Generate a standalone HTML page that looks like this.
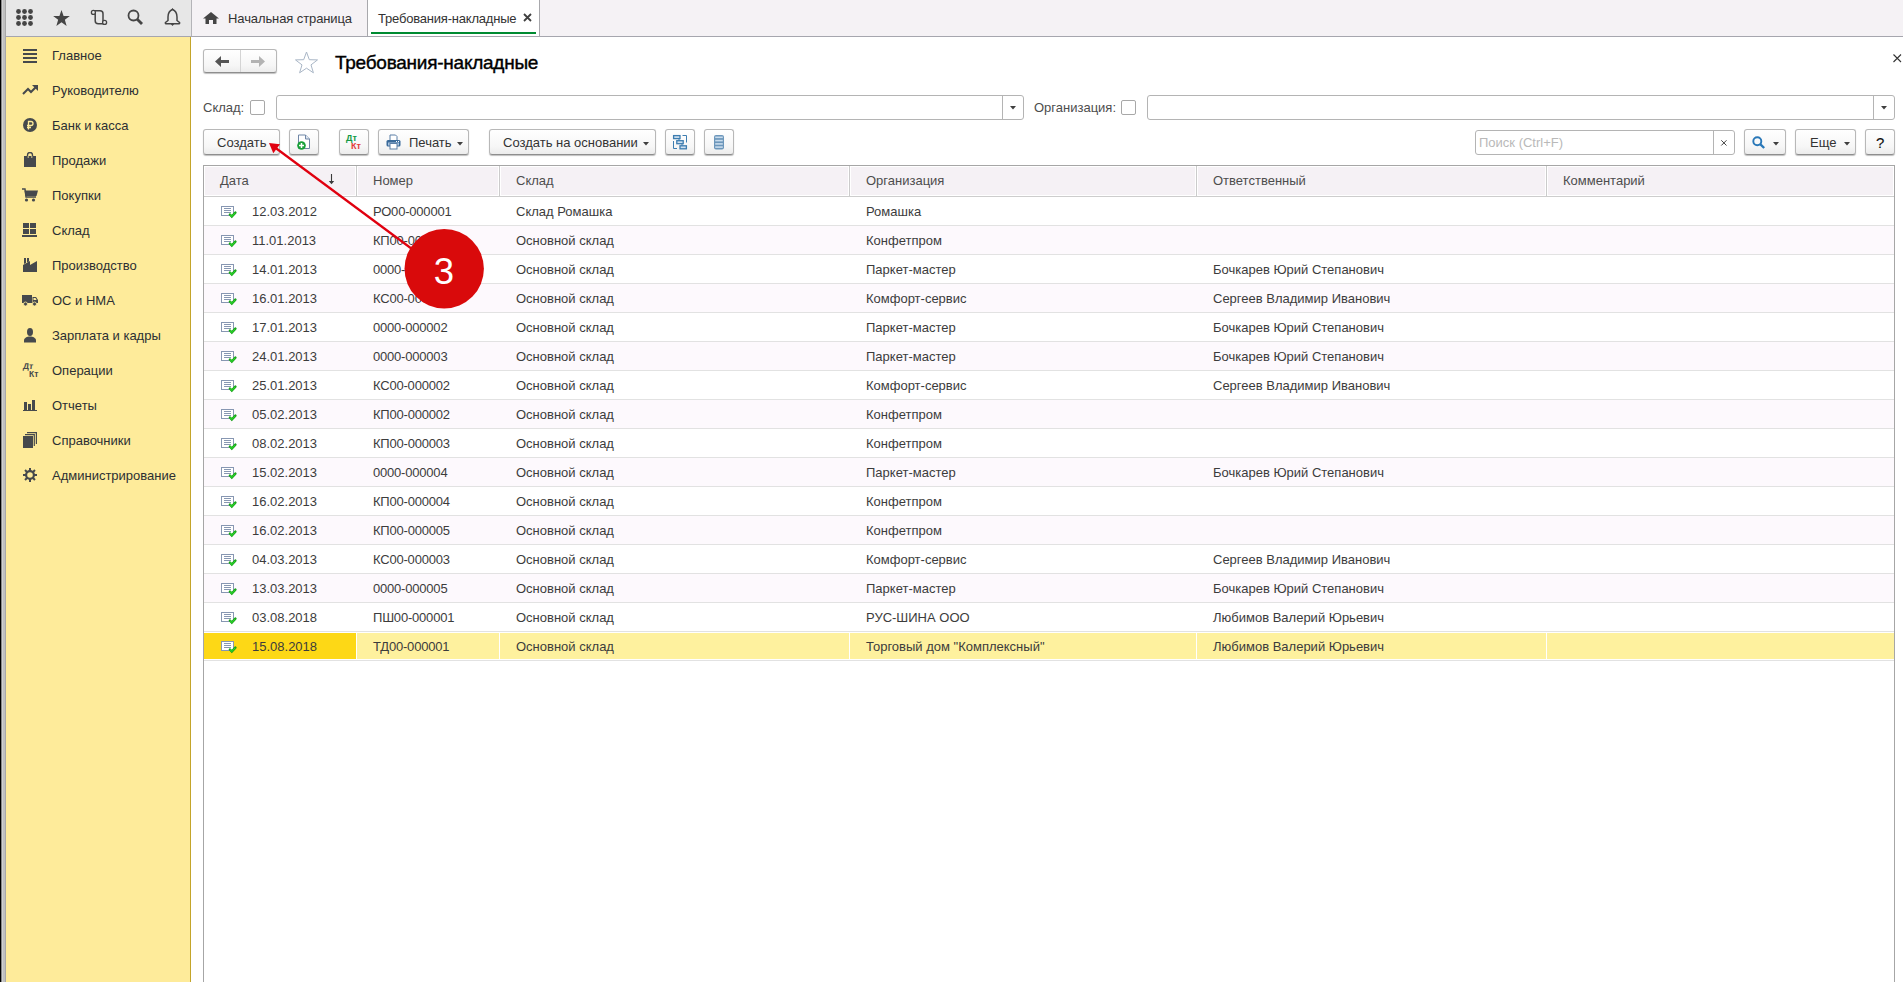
<!DOCTYPE html>
<html><head><meta charset="utf-8"><style>
*{margin:0;padding:0;box-sizing:border-box}
html,body{width:1903px;height:982px;overflow:hidden;background:#fff;position:relative}
.a{position:absolute}
.t{position:absolute;font-family:"Liberation Sans",sans-serif;font-size:13px;line-height:15px;white-space:pre;color:#333}
.side{color:#2c2f33}
.cell{color:#3c3c3c}
.hdr{color:#4d4d4d}
.btn{position:absolute;border:1px solid #b8b8b8;border-bottom-color:#8e8e8e;border-radius:3px;background:linear-gradient(#fff,#f6f6f6 70%,#ececec);box-shadow:0 1px 1px rgba(0,0,0,.25)}
.inp{position:absolute;border:1px solid #b4b4b4;border-radius:3px;background:#fff}
.cb{position:absolute;width:15px;height:15px;border:1px solid #a8a8a8;border-radius:2px;background:#fff}
</style></head><body>
<!-- left frame -->
<div class="a" style="left:0;top:0;width:1px;height:982px;background:#000"></div>
<div class="a" style="left:1px;top:0;width:1px;height:982px;background:#888"></div>
<div class="a" style="left:2px;top:0;width:1px;height:982px;background:#d0d0d0"></div>
<div class="a" style="left:3px;top:0;width:2px;height:982px;background:#c0c0c0"></div>
<div class="a" style="left:5px;top:0;width:1px;height:982px;background:#a8a8a8"></div>
<!-- top bar -->
<div class="a" style="left:6px;top:0;width:185px;height:36px;background:#e7e7e7"></div>
<div class="a" style="left:191px;top:0;width:1712px;height:36px;background:#f5f2f5"></div>
<div class="a" style="left:191px;top:0;width:1px;height:36px;background:#b4b4b8"></div>
<div class="a" style="left:367px;top:0;width:1px;height:36px;background:#a8a8ac"></div>
<div class="a" style="left:368px;top:0;width:171px;height:36px;background:#fff"></div>
<div class="a" style="left:539px;top:0;width:1px;height:36px;background:#a8a8ac"></div>
<div class="a" style="left:371px;top:32px;width:165px;height:2px;background:#008b32"></div>
<div class="a" style="left:6px;top:36px;width:1897px;height:1px;background:#a6a6ae"></div>
<div class="t" style="left:228px;top:11px;letter-spacing:-0.1px">Начальная страница</div>
<div class="t" style="left:378px;top:11px;letter-spacing:-0.2px">Требования-накладные</div>
<!-- sidebar -->
<div class="a" style="left:6px;top:37px;width:184px;height:945px;background:#feeb9a"></div>
<div class="a" style="left:190px;top:37px;width:1px;height:945px;background:#c4a52a"></div>
<svg class="a" style="left:16px;top:9px" width="17" height="17"><circle cx="2.5" cy="2.5" r="2.4" fill="#454545"/><circle cx="8.5" cy="2.5" r="2.4" fill="#454545"/><circle cx="14.5" cy="2.5" r="2.4" fill="#454545"/><circle cx="2.5" cy="8.5" r="2.4" fill="#454545"/><circle cx="8.5" cy="8.5" r="2.4" fill="#454545"/><circle cx="14.5" cy="8.5" r="2.4" fill="#454545"/><circle cx="2.5" cy="14.5" r="2.4" fill="#454545"/><circle cx="8.5" cy="14.5" r="2.4" fill="#454545"/><circle cx="14.5" cy="14.5" r="2.4" fill="#454545"/></svg><svg class="a" style="left:53px;top:10px" width="17" height="16" viewBox="0 0 24 23"><path d="M12 0 L15 8.5 L24 8.6 L16.8 14 L19.4 23 L12 17.6 L4.6 23 L7.2 14 L0 8.6 L9 8.5 Z" fill="#454545"/></svg><svg class="a" style="left:86px;top:5px" width="24" height="24"><path d="M7 5.8 H14 a3 3 0 0 1 3 3 V17" stroke="#454545" stroke-width="1.5" fill="none"/><path d="M9.2 7.5 V15.7 a3 3 0 0 0 3 3 H19" stroke="#454545" stroke-width="1.5" fill="none"/><circle cx="7.4" cy="7.4" r="2" fill="#e7e7e7" stroke="#454545" stroke-width="1.3"/><circle cx="18.6" cy="17.4" r="2" fill="#e7e7e7" stroke="#454545" stroke-width="1.3"/></svg><svg class="a" style="left:127px;top:9px" width="17" height="17"><circle cx="6.5" cy="6.5" r="5" stroke="#454545" stroke-width="1.8" fill="none"/><path d="M10 10 L15 15" stroke="#454545" stroke-width="2.8"/></svg><svg class="a" style="left:164px;top:8px" width="17" height="19"><path d="M8.5 1.5 C5 3 4 5 4 9 V12.5 L1.5 14.5 a0.8 0.8 0 0 0 0.5 1.3 H15 a0.8 0.8 0 0 0 0.5 -1.3 L13 12.5 V9 C13 5 12 3 8.5 1.5 Z" stroke="#454545" stroke-width="1.5" fill="none"/><path d="M8.5 0 L9.8 1.8 H7.2 Z M6.8 16 H10.2 L8.5 18 Z" fill="#454545"/></svg><svg class="a" style="left:203px;top:12px" width="16" height="12"><path d="M8 0 L16 6.5 H13.5 V12 H10 V8 H6 V12 H2.5 V6.5 H0 Z" fill="#454545"/></svg><svg class="a" style="left:523px;top:13px" width="9" height="9"><path d="M1 1 L8 8 M8 1 L1 8" stroke="#404040" stroke-width="1.8"/></svg><svg class="a" style="left:1893px;top:54px" width="9" height="9"><path d="M0.5 0.5 L8 8 M8 0.5 L0.5 8" stroke="#333" stroke-width="1.1"/></svg><div class="btn" style="left:203px;top:49px;width:74px;height:24px"></div><div class="a" style="left:240px;top:50px;width:1px;height:22px;background:#d4d4d4"></div><svg class="a" style="left:215px;top:56px" width="15" height="12"><path d="M0 5.5 L6 0 V4 H14 V7 H6 V11 Z" fill="#555"/></svg><svg class="a" style="left:251px;top:56px" width="15" height="12"><path d="M14 5.5 L8 0 V4 H0 V7 H8 V11 Z" fill="#b3b3b3"/></svg><svg class="a" style="left:294px;top:51px" width="25" height="23" viewBox="0 0 25 23"><path d="M12.5 1 L15.3 8.7 L23.5 8.9 L17 13.9 L19.4 21.8 L12.5 17.2 L5.6 21.8 L8 13.9 L1.5 8.9 L9.7 8.7 Z" stroke="#a9b6c6" stroke-width="1" fill="none"/></svg><div class="a" style="left:335px;top:52px;font-family:'Liberation Sans';font-size:19px;letter-spacing:-0.25px;line-height:22px;color:#000;-webkit-text-stroke:0.4px #000;white-space:pre">Требования-накладные</div><div class="t hdr" style="left:203px;top:100px;">Склад:</div><div class="cb" style="left:250px;top:100px"></div><div class="inp" style="left:276px;top:95px;width:748px;height:25px"></div><div class="a" style="left:1002px;top:96px;width:1px;height:23px;background:#b4b4b4"></div><svg class="a" style="left:1010px;top:106px" width="6" height="4"><path d="M0 0 H6 L3 3.5 Z" fill="#404040"/></svg><div class="t hdr" style="left:1034px;top:100px;">Организация:</div><div class="cb" style="left:1121px;top:100px"></div><div class="inp" style="left:1147px;top:95px;width:748px;height:25px"></div><div class="a" style="left:1873px;top:96px;width:1px;height:23px;background:#b4b4b4"></div><svg class="a" style="left:1881px;top:106px" width="6" height="4"><path d="M0 0 H6 L3 3.5 Z" fill="#404040"/></svg><div class="btn" style="left:203px;top:129px;width:77px;height:26px"></div><div class="t" style="left:217px;top:135px;">Создать</div><div class="btn" style="left:289px;top:129px;width:30px;height:26px"></div><svg class="a" style="left:296px;top:134px" width="16" height="16"><path d="M2.5 1 H9.5 L13.5 5 V14.5 H2.5 Z" fill="#fff" stroke="#6f86a6" stroke-width="1"/><path d="M9.5 1 V5 H13.5" fill="#dfe6f0" stroke="#6f86a6" stroke-width="1"/><circle cx="5.5" cy="11.5" r="4.3" fill="#18a038"/><path d="M5.5 9 V14 M3 11.5 H8" stroke="#fff" stroke-width="1.5"/></svg><div class="btn" style="left:339px;top:129px;width:30px;height:26px"></div><div class="a" style="left:346px;top:133px;font:bold 9px/10px 'Liberation Sans';color:#129a45">Дт</div><div class="a" style="left:351px;top:141px;font:bold 9px/10px 'Liberation Sans';color:#e23a3a">Кт</div><div class="btn" style="left:378px;top:129px;width:91px;height:26px"></div><svg class="a" style="left:386px;top:134px" width="15" height="16"><path d="M4 1 H9.5 L11 2.5 V7 H4 Z" fill="#fff" stroke="#5a7ea6" stroke-width="1"/><rect x="0.5" y="6" width="14" height="6.5" rx="1.5" fill="#3a6a9a"/><rect x="2" y="8.5" width="11" height="3" fill="#a9c4e0"/><rect x="4" y="9.5" width="7" height="5.5" fill="#fff" stroke="#5a7ea6" stroke-width="1"/><rect x="10" y="7" width="1" height="1" fill="#fff"/><rect x="12" y="7" width="1" height="1" fill="#fff"/></svg><div class="t" style="left:409px;top:135px;">Печать</div><svg class="a" style="left:457px;top:142px" width="6" height="4"><path d="M0 0 H6 L3 3.5 Z" fill="#404040"/></svg><div class="btn" style="left:489px;top:129px;width:167px;height:26px"></div><div class="t" style="left:503px;top:135px;">Создать на основании</div><svg class="a" style="left:643px;top:142px" width="6" height="4"><path d="M0 0 H6 L3 3.5 Z" fill="#404040"/></svg><div class="btn" style="left:665px;top:129px;width:30px;height:26px"></div><svg class="a" style="left:672px;top:134px" width="16" height="16"><g fill="#cfe0f0" stroke="#3d7db0" stroke-width="1.3"><rect x="1.6" y="1.6" width="6.4" height="3"/><rect x="4.8" y="6.7" width="6.4" height="3"/><rect x="8" y="11.8" width="6.4" height="3"/></g><path d="M7 4.8 V6.6 M10 9.9 V11.7" stroke="#3d7db0" stroke-width="1"/><path d="M10.5 1.5 H14.5 V8.5 M1.5 7 V14.5 H5" stroke="#3d7db0" stroke-width="1" fill="none"/></svg><div class="btn" style="left:704px;top:129px;width:30px;height:26px"></div><svg class="a" style="left:714px;top:135px" width="10" height="15"><rect x="0" y="0" width="10" height="14.5" rx="2" fill="#6d97bb"/><g fill="#c9dced"><rect x="1.2" y="1.5" width="7.6" height="1.6"/><rect x="1.2" y="4.8" width="7.6" height="1.6"/><rect x="1.2" y="8.1" width="7.6" height="1.6"/><rect x="1.2" y="11.3" width="7.6" height="1.6"/></g></svg><div class="inp" style="left:1475px;top:130px;width:260px;height:25px"></div><div class="a" style="left:1713px;top:131px;width:1px;height:23px;background:#b4b4b4"></div><div class="t" style="left:1479px;top:135px;color:#b9b9b9">Поиск (Ctrl+F)</div><svg class="a" style="left:1720px;top:139px" width="8" height="8"><path d="M1.3 1.3 L6.5 6.5 M6.5 1.3 L1.3 6.5" stroke="#444" stroke-width="1"/></svg><div class="btn" style="left:1744px;top:129px;width:42px;height:26px"></div><svg class="a" style="left:1752px;top:136px" width="14" height="13"><circle cx="5.3" cy="5.3" r="4" stroke="#2a78b8" stroke-width="1.9" fill="none"/><path d="M8.2 8.2 L12.2 12" stroke="#2a78b8" stroke-width="2.4"/></svg><svg class="a" style="left:1773px;top:142px" width="6" height="4"><path d="M0 0 H6 L3 3.5 Z" fill="#404040"/></svg><div class="btn" style="left:1795px;top:129px;width:61px;height:26px"></div><div class="t" style="left:1810px;top:135px;">Еще</div><svg class="a" style="left:1844px;top:142px" width="6" height="4"><path d="M0 0 H6 L3 3.5 Z" fill="#404040"/></svg><div class="btn" style="left:1865px;top:129px;width:30px;height:26px"></div><div class="a" style="left:1876px;top:135px;font:15px/15px 'Liberation Sans';color:#111;-webkit-text-stroke:0.15px #111">?</div><div class="a" style="left:203px;top:165px;width:1692px;height:817px;border:1px solid #a6a6a6;border-bottom:none"></div><div class="a" style="left:205px;top:167px;width:1688px;height:28px;background:#f5f1f5"></div><div class="a" style="left:204px;top:196px;width:1690px;height:1px;background:#cdcdcd"></div><div class="a" style="left:355px;top:166px;width:3px;height:30px;background:#fff"></div><div class="a" style="left:356px;top:166px;width:1px;height:30px;background:#cbcbcb"></div><div class="a" style="left:498px;top:166px;width:3px;height:30px;background:#fff"></div><div class="a" style="left:499px;top:166px;width:1px;height:30px;background:#cbcbcb"></div><div class="a" style="left:848px;top:166px;width:3px;height:30px;background:#fff"></div><div class="a" style="left:849px;top:166px;width:1px;height:30px;background:#cbcbcb"></div><div class="a" style="left:1195px;top:166px;width:3px;height:30px;background:#fff"></div><div class="a" style="left:1196px;top:166px;width:1px;height:30px;background:#cbcbcb"></div><div class="a" style="left:1545px;top:166px;width:3px;height:30px;background:#fff"></div><div class="a" style="left:1546px;top:166px;width:1px;height:30px;background:#cbcbcb"></div><div class="t hdr" style="left:220px;top:173px;">Дата</div><div class="t hdr" style="left:373px;top:173px;">Номер</div><div class="t hdr" style="left:516px;top:173px;">Склад</div><div class="t hdr" style="left:866px;top:173px;">Организация</div><div class="t hdr" style="left:1213px;top:173px;">Ответственный</div><div class="t hdr" style="left:1563px;top:173px;">Комментарий</div><svg class="a" style="left:328px;top:173px" width="7" height="12"><path d="M3.5 1 V9.5" stroke="#3a3a3a" stroke-width="1.1"/><path d="M0.8 8 L6.2 8 L3.5 11.2 Z" fill="#3a3a3a"/></svg><div class="t side" style="left:52px;top:48px;">Главное</div><div class="t side" style="left:52px;top:83px;">Руководителю</div><div class="t side" style="left:52px;top:118px;">Банк и касса</div><div class="t side" style="left:52px;top:153px;">Продажи</div><div class="t side" style="left:52px;top:188px;">Покупки</div><div class="t side" style="left:52px;top:223px;">Склад</div><div class="t side" style="left:52px;top:258px;">Производство</div><div class="t side" style="left:52px;top:293px;">ОС и НМА</div><div class="t side" style="left:52px;top:328px;">Зарплата и кадры</div><div class="t side" style="left:52px;top:363px;">Операции</div><div class="t side" style="left:52px;top:398px;">Отчеты</div><div class="t side" style="left:52px;top:433px;">Справочники</div><div class="t side" style="left:52px;top:468px;">Администрирование</div><svg class="a" style="left:23px;top:48px" width="14" height="15"><rect x="0" y="1" width="14" height="2" fill="#46494c"/><rect x="0" y="5" width="14" height="2" fill="#46494c"/><rect x="0" y="9" width="14" height="2" fill="#46494c"/><rect x="0" y="13" width="14" height="2" fill="#46494c"/></svg><svg class="a" style="left:22px;top:84px" width="17" height="11"><path d="M1 10 L6 5 L9 8 L14 3" stroke="#46494c" stroke-width="2" fill="none"/><path d="M10 1 L16 1 L16 7 Z" fill="#46494c"/></svg><svg class="a" style="left:23px;top:118px" width="14" height="14"><circle cx="7" cy="7" r="7" fill="#46494c"/><path d="M5.5 11.5 V3.5 H8 a2 2 0 0 1 0 4 H4 M4 9.5 H8" stroke="#feeb9a" stroke-width="1.3" fill="none"/></svg><svg class="a" style="left:24px;top:152px" width="12" height="15"><path d="M0 4 H12 V15 H0 Z" fill="#46494c"/><path d="M3.5 6 V3 a2.5 2.5 0 0 1 5 0 V6" stroke="#46494c" stroke-width="1.4" fill="none"/><path d="M4.2 4 V6 M7.8 4 V6" stroke="#feeb9a" stroke-width="0.8"/></svg><svg class="a" style="left:22px;top:188px" width="16" height="14"><path d="M0 1 H3 L4 9 H14" stroke="#46494c" stroke-width="1.4" fill="none"/><path d="M2.5 2.5 H16 L14.5 8 H3.5 Z" fill="#46494c"/><circle cx="4.5" cy="12" r="1.6" fill="#46494c"/><circle cx="11.5" cy="12" r="1.6" fill="#46494c"/></svg><svg class="a" style="left:22px;top:223px" width="15" height="14" shape-rendering="crispEdges"><rect x="1" y="0" width="6" height="5" fill="#46494c"/><rect x="8" y="0" width="6" height="5" fill="#46494c"/><rect x="1" y="6" width="6" height="5" fill="#46494c"/><rect x="8" y="6" width="6" height="5" fill="#46494c"/><rect x="0" y="12" width="15" height="2" fill="#46494c"/></svg><svg class="a" style="left:23px;top:257px" width="14" height="15"><path d="M1 1 H3 V6 L1 7 Z M4 1 H6 V4.5 L4 5.5 Z" fill="#46494c"/><path d="M0 8 L7 4 V8 L14 4 V15 H0 Z" fill="#46494c"/></svg><svg class="a" style="left:22px;top:295px" width="16" height="11"><path d="M0 0 H10 V8 H0 Z" fill="#46494c"/><path d="M10.5 2 H14 L16 5 V8 H10.5 Z" fill="#46494c"/><path d="M11.5 3 H13.5 L14.6 5 H11.5 Z" fill="#feeb9a"/><circle cx="3.5" cy="9" r="2" fill="#46494c" stroke="#feeb9a" stroke-width="0.8"/><circle cx="12.5" cy="9" r="2" fill="#46494c" stroke="#feeb9a" stroke-width="0.8"/></svg><svg class="a" style="left:24px;top:328px" width="12" height="15"><ellipse cx="6" cy="4" rx="3" ry="4" fill="#46494c"/><path d="M0 14.5 V12.5 C0 10 3 8.5 6 8.5 C9 8.5 12 10 12 12.5 V14.5 Z" fill="#46494c"/></svg><div class="a" style="left:23px;top:362px;font:bold 8.5px/9px 'Liberation Sans';color:#46494c;transform:skewX(-6deg)">Дт</div><div class="a" style="left:29px;top:370px;font:bold 8.5px/9px 'Liberation Sans';color:#46494c">Кт</div><svg class="a" style="left:23px;top:399px" width="14" height="13" shape-rendering="crispEdges"><rect x="1" y="3" width="3" height="8" fill="#46494c"/><rect x="5" y="5" width="3" height="6" fill="#46494c"/><rect x="9" y="1" width="3" height="10" fill="#46494c"/><rect x="0" y="11" width="14" height="1" fill="#46494c"/></svg><svg class="a" style="left:23px;top:432px" width="14" height="16"><rect x="0" y="4" width="10" height="12" fill="#46494c"/><path d="M2 2.7 H11.3 V14" stroke="#46494c" stroke-width="1.2" fill="none"/><path d="M4 0.6 H13.4 V12" stroke="#46494c" stroke-width="1.2" fill="none"/></svg><svg class="a" style="left:23px;top:468px" width="14" height="14" viewBox="0 0 14 14"><g fill="#46494c"><rect x="6" y="0" width="2" height="3" transform="rotate(0 7 7)"/><rect x="6" y="0" width="2" height="3" transform="rotate(45 7 7)"/><rect x="6" y="0" width="2" height="3" transform="rotate(90 7 7)"/><rect x="6" y="0" width="2" height="3" transform="rotate(135 7 7)"/><rect x="6" y="0" width="2" height="3" transform="rotate(180 7 7)"/><rect x="6" y="0" width="2" height="3" transform="rotate(225 7 7)"/><rect x="6" y="0" width="2" height="3" transform="rotate(270 7 7)"/><rect x="6" y="0" width="2" height="3" transform="rotate(315 7 7)"/></g><circle cx="7" cy="7" r="3.9" fill="none" stroke="#46494c" stroke-width="2.2"/></svg><div class="a" style="left:204px;top:225px;width:1690px;height:1px;background:#e2e2e2"></div><svg class="a" style="left:221px;top:206px" width="17" height="13"><rect x="0.5" y="0.5" width="12" height="9" fill="#fff" stroke="#8797b2" stroke-width="1"/><path d="M3 2.5 H10 M3 4.5 H10 M3 6.5 H10" stroke="#8797b2" stroke-width="1"/><path d="M8.9 8.5 L10.8 10.5 L14.4 6.6" stroke="#139a13" stroke-width="2.4" fill="none" stroke-linecap="round"/><path d="M8.9 8.5 L10.8 10.5 L14.4 6.6" stroke="#2bd82b" stroke-width="1.1" fill="none"/></svg><div class="t cell" style="left:252px;top:204px;">12.03.2012</div><div class="t cell" style="left:373px;top:204px;letter-spacing:-0.2px;">РО00-000001</div><div class="t cell" style="left:516px;top:204px;">Склад Ромашка</div><div class="t cell" style="left:866px;top:204px;">Ромашка</div><div class="a" style="left:204px;top:226px;width:1690px;height:28px;background:#fdf9fd"></div><div class="a" style="left:204px;top:254px;width:1690px;height:1px;background:#e2e2e2"></div><svg class="a" style="left:221px;top:235px" width="17" height="13"><rect x="0.5" y="0.5" width="12" height="9" fill="#fff" stroke="#8797b2" stroke-width="1"/><path d="M3 2.5 H10 M3 4.5 H10 M3 6.5 H10" stroke="#8797b2" stroke-width="1"/><path d="M8.9 8.5 L10.8 10.5 L14.4 6.6" stroke="#139a13" stroke-width="2.4" fill="none" stroke-linecap="round"/><path d="M8.9 8.5 L10.8 10.5 L14.4 6.6" stroke="#2bd82b" stroke-width="1.1" fill="none"/></svg><div class="t cell" style="left:252px;top:233px;">11.01.2013</div><div class="t cell" style="left:373px;top:233px;letter-spacing:-0.2px;">КП00-000001</div><div class="t cell" style="left:516px;top:233px;">Основной склад</div><div class="t cell" style="left:866px;top:233px;">Конфетпром</div><div class="a" style="left:204px;top:283px;width:1690px;height:1px;background:#e2e2e2"></div><svg class="a" style="left:221px;top:264px" width="17" height="13"><rect x="0.5" y="0.5" width="12" height="9" fill="#fff" stroke="#8797b2" stroke-width="1"/><path d="M3 2.5 H10 M3 4.5 H10 M3 6.5 H10" stroke="#8797b2" stroke-width="1"/><path d="M8.9 8.5 L10.8 10.5 L14.4 6.6" stroke="#139a13" stroke-width="2.4" fill="none" stroke-linecap="round"/><path d="M8.9 8.5 L10.8 10.5 L14.4 6.6" stroke="#2bd82b" stroke-width="1.1" fill="none"/></svg><div class="t cell" style="left:252px;top:262px;">14.01.2013</div><div class="t cell" style="left:373px;top:262px;letter-spacing:-0.2px;">0000-000001</div><div class="t cell" style="left:516px;top:262px;">Основной склад</div><div class="t cell" style="left:866px;top:262px;">Паркет-мастер</div><div class="t cell" style="left:1213px;top:262px;">Бочкарев Юрий Степанович</div><div class="a" style="left:204px;top:284px;width:1690px;height:28px;background:#fdf9fd"></div><div class="a" style="left:204px;top:312px;width:1690px;height:1px;background:#e2e2e2"></div><svg class="a" style="left:221px;top:293px" width="17" height="13"><rect x="0.5" y="0.5" width="12" height="9" fill="#fff" stroke="#8797b2" stroke-width="1"/><path d="M3 2.5 H10 M3 4.5 H10 M3 6.5 H10" stroke="#8797b2" stroke-width="1"/><path d="M8.9 8.5 L10.8 10.5 L14.4 6.6" stroke="#139a13" stroke-width="2.4" fill="none" stroke-linecap="round"/><path d="M8.9 8.5 L10.8 10.5 L14.4 6.6" stroke="#2bd82b" stroke-width="1.1" fill="none"/></svg><div class="t cell" style="left:252px;top:291px;">16.01.2013</div><div class="t cell" style="left:373px;top:291px;letter-spacing:-0.2px;">КС00-000001</div><div class="t cell" style="left:516px;top:291px;">Основной склад</div><div class="t cell" style="left:866px;top:291px;">Комфорт-сервис</div><div class="t cell" style="left:1213px;top:291px;">Сергеев Владимир Иванович</div><div class="a" style="left:204px;top:341px;width:1690px;height:1px;background:#e2e2e2"></div><svg class="a" style="left:221px;top:322px" width="17" height="13"><rect x="0.5" y="0.5" width="12" height="9" fill="#fff" stroke="#8797b2" stroke-width="1"/><path d="M3 2.5 H10 M3 4.5 H10 M3 6.5 H10" stroke="#8797b2" stroke-width="1"/><path d="M8.9 8.5 L10.8 10.5 L14.4 6.6" stroke="#139a13" stroke-width="2.4" fill="none" stroke-linecap="round"/><path d="M8.9 8.5 L10.8 10.5 L14.4 6.6" stroke="#2bd82b" stroke-width="1.1" fill="none"/></svg><div class="t cell" style="left:252px;top:320px;">17.01.2013</div><div class="t cell" style="left:373px;top:320px;letter-spacing:-0.2px;">0000-000002</div><div class="t cell" style="left:516px;top:320px;">Основной склад</div><div class="t cell" style="left:866px;top:320px;">Паркет-мастер</div><div class="t cell" style="left:1213px;top:320px;">Бочкарев Юрий Степанович</div><div class="a" style="left:204px;top:342px;width:1690px;height:28px;background:#fdf9fd"></div><div class="a" style="left:204px;top:370px;width:1690px;height:1px;background:#e2e2e2"></div><svg class="a" style="left:221px;top:351px" width="17" height="13"><rect x="0.5" y="0.5" width="12" height="9" fill="#fff" stroke="#8797b2" stroke-width="1"/><path d="M3 2.5 H10 M3 4.5 H10 M3 6.5 H10" stroke="#8797b2" stroke-width="1"/><path d="M8.9 8.5 L10.8 10.5 L14.4 6.6" stroke="#139a13" stroke-width="2.4" fill="none" stroke-linecap="round"/><path d="M8.9 8.5 L10.8 10.5 L14.4 6.6" stroke="#2bd82b" stroke-width="1.1" fill="none"/></svg><div class="t cell" style="left:252px;top:349px;">24.01.2013</div><div class="t cell" style="left:373px;top:349px;letter-spacing:-0.2px;">0000-000003</div><div class="t cell" style="left:516px;top:349px;">Основной склад</div><div class="t cell" style="left:866px;top:349px;">Паркет-мастер</div><div class="t cell" style="left:1213px;top:349px;">Бочкарев Юрий Степанович</div><div class="a" style="left:204px;top:399px;width:1690px;height:1px;background:#e2e2e2"></div><svg class="a" style="left:221px;top:380px" width="17" height="13"><rect x="0.5" y="0.5" width="12" height="9" fill="#fff" stroke="#8797b2" stroke-width="1"/><path d="M3 2.5 H10 M3 4.5 H10 M3 6.5 H10" stroke="#8797b2" stroke-width="1"/><path d="M8.9 8.5 L10.8 10.5 L14.4 6.6" stroke="#139a13" stroke-width="2.4" fill="none" stroke-linecap="round"/><path d="M8.9 8.5 L10.8 10.5 L14.4 6.6" stroke="#2bd82b" stroke-width="1.1" fill="none"/></svg><div class="t cell" style="left:252px;top:378px;">25.01.2013</div><div class="t cell" style="left:373px;top:378px;letter-spacing:-0.2px;">КС00-000002</div><div class="t cell" style="left:516px;top:378px;">Основной склад</div><div class="t cell" style="left:866px;top:378px;">Комфорт-сервис</div><div class="t cell" style="left:1213px;top:378px;">Сергеев Владимир Иванович</div><div class="a" style="left:204px;top:400px;width:1690px;height:28px;background:#fdf9fd"></div><div class="a" style="left:204px;top:428px;width:1690px;height:1px;background:#e2e2e2"></div><svg class="a" style="left:221px;top:409px" width="17" height="13"><rect x="0.5" y="0.5" width="12" height="9" fill="#fff" stroke="#8797b2" stroke-width="1"/><path d="M3 2.5 H10 M3 4.5 H10 M3 6.5 H10" stroke="#8797b2" stroke-width="1"/><path d="M8.9 8.5 L10.8 10.5 L14.4 6.6" stroke="#139a13" stroke-width="2.4" fill="none" stroke-linecap="round"/><path d="M8.9 8.5 L10.8 10.5 L14.4 6.6" stroke="#2bd82b" stroke-width="1.1" fill="none"/></svg><div class="t cell" style="left:252px;top:407px;">05.02.2013</div><div class="t cell" style="left:373px;top:407px;letter-spacing:-0.2px;">КП00-000002</div><div class="t cell" style="left:516px;top:407px;">Основной склад</div><div class="t cell" style="left:866px;top:407px;">Конфетпром</div><div class="a" style="left:204px;top:457px;width:1690px;height:1px;background:#e2e2e2"></div><svg class="a" style="left:221px;top:438px" width="17" height="13"><rect x="0.5" y="0.5" width="12" height="9" fill="#fff" stroke="#8797b2" stroke-width="1"/><path d="M3 2.5 H10 M3 4.5 H10 M3 6.5 H10" stroke="#8797b2" stroke-width="1"/><path d="M8.9 8.5 L10.8 10.5 L14.4 6.6" stroke="#139a13" stroke-width="2.4" fill="none" stroke-linecap="round"/><path d="M8.9 8.5 L10.8 10.5 L14.4 6.6" stroke="#2bd82b" stroke-width="1.1" fill="none"/></svg><div class="t cell" style="left:252px;top:436px;">08.02.2013</div><div class="t cell" style="left:373px;top:436px;letter-spacing:-0.2px;">КП00-000003</div><div class="t cell" style="left:516px;top:436px;">Основной склад</div><div class="t cell" style="left:866px;top:436px;">Конфетпром</div><div class="a" style="left:204px;top:458px;width:1690px;height:28px;background:#fdf9fd"></div><div class="a" style="left:204px;top:486px;width:1690px;height:1px;background:#e2e2e2"></div><svg class="a" style="left:221px;top:467px" width="17" height="13"><rect x="0.5" y="0.5" width="12" height="9" fill="#fff" stroke="#8797b2" stroke-width="1"/><path d="M3 2.5 H10 M3 4.5 H10 M3 6.5 H10" stroke="#8797b2" stroke-width="1"/><path d="M8.9 8.5 L10.8 10.5 L14.4 6.6" stroke="#139a13" stroke-width="2.4" fill="none" stroke-linecap="round"/><path d="M8.9 8.5 L10.8 10.5 L14.4 6.6" stroke="#2bd82b" stroke-width="1.1" fill="none"/></svg><div class="t cell" style="left:252px;top:465px;">15.02.2013</div><div class="t cell" style="left:373px;top:465px;letter-spacing:-0.2px;">0000-000004</div><div class="t cell" style="left:516px;top:465px;">Основной склад</div><div class="t cell" style="left:866px;top:465px;">Паркет-мастер</div><div class="t cell" style="left:1213px;top:465px;">Бочкарев Юрий Степанович</div><div class="a" style="left:204px;top:515px;width:1690px;height:1px;background:#e2e2e2"></div><svg class="a" style="left:221px;top:496px" width="17" height="13"><rect x="0.5" y="0.5" width="12" height="9" fill="#fff" stroke="#8797b2" stroke-width="1"/><path d="M3 2.5 H10 M3 4.5 H10 M3 6.5 H10" stroke="#8797b2" stroke-width="1"/><path d="M8.9 8.5 L10.8 10.5 L14.4 6.6" stroke="#139a13" stroke-width="2.4" fill="none" stroke-linecap="round"/><path d="M8.9 8.5 L10.8 10.5 L14.4 6.6" stroke="#2bd82b" stroke-width="1.1" fill="none"/></svg><div class="t cell" style="left:252px;top:494px;">16.02.2013</div><div class="t cell" style="left:373px;top:494px;letter-spacing:-0.2px;">КП00-000004</div><div class="t cell" style="left:516px;top:494px;">Основной склад</div><div class="t cell" style="left:866px;top:494px;">Конфетпром</div><div class="a" style="left:204px;top:516px;width:1690px;height:28px;background:#fdf9fd"></div><div class="a" style="left:204px;top:544px;width:1690px;height:1px;background:#e2e2e2"></div><svg class="a" style="left:221px;top:525px" width="17" height="13"><rect x="0.5" y="0.5" width="12" height="9" fill="#fff" stroke="#8797b2" stroke-width="1"/><path d="M3 2.5 H10 M3 4.5 H10 M3 6.5 H10" stroke="#8797b2" stroke-width="1"/><path d="M8.9 8.5 L10.8 10.5 L14.4 6.6" stroke="#139a13" stroke-width="2.4" fill="none" stroke-linecap="round"/><path d="M8.9 8.5 L10.8 10.5 L14.4 6.6" stroke="#2bd82b" stroke-width="1.1" fill="none"/></svg><div class="t cell" style="left:252px;top:523px;">16.02.2013</div><div class="t cell" style="left:373px;top:523px;letter-spacing:-0.2px;">КП00-000005</div><div class="t cell" style="left:516px;top:523px;">Основной склад</div><div class="t cell" style="left:866px;top:523px;">Конфетпром</div><div class="a" style="left:204px;top:573px;width:1690px;height:1px;background:#e2e2e2"></div><svg class="a" style="left:221px;top:554px" width="17" height="13"><rect x="0.5" y="0.5" width="12" height="9" fill="#fff" stroke="#8797b2" stroke-width="1"/><path d="M3 2.5 H10 M3 4.5 H10 M3 6.5 H10" stroke="#8797b2" stroke-width="1"/><path d="M8.9 8.5 L10.8 10.5 L14.4 6.6" stroke="#139a13" stroke-width="2.4" fill="none" stroke-linecap="round"/><path d="M8.9 8.5 L10.8 10.5 L14.4 6.6" stroke="#2bd82b" stroke-width="1.1" fill="none"/></svg><div class="t cell" style="left:252px;top:552px;">04.03.2013</div><div class="t cell" style="left:373px;top:552px;letter-spacing:-0.2px;">КС00-000003</div><div class="t cell" style="left:516px;top:552px;">Основной склад</div><div class="t cell" style="left:866px;top:552px;">Комфорт-сервис</div><div class="t cell" style="left:1213px;top:552px;">Сергеев Владимир Иванович</div><div class="a" style="left:204px;top:574px;width:1690px;height:28px;background:#fdf9fd"></div><div class="a" style="left:204px;top:602px;width:1690px;height:1px;background:#e2e2e2"></div><svg class="a" style="left:221px;top:583px" width="17" height="13"><rect x="0.5" y="0.5" width="12" height="9" fill="#fff" stroke="#8797b2" stroke-width="1"/><path d="M3 2.5 H10 M3 4.5 H10 M3 6.5 H10" stroke="#8797b2" stroke-width="1"/><path d="M8.9 8.5 L10.8 10.5 L14.4 6.6" stroke="#139a13" stroke-width="2.4" fill="none" stroke-linecap="round"/><path d="M8.9 8.5 L10.8 10.5 L14.4 6.6" stroke="#2bd82b" stroke-width="1.1" fill="none"/></svg><div class="t cell" style="left:252px;top:581px;">13.03.2013</div><div class="t cell" style="left:373px;top:581px;letter-spacing:-0.2px;">0000-000005</div><div class="t cell" style="left:516px;top:581px;">Основной склад</div><div class="t cell" style="left:866px;top:581px;">Паркет-мастер</div><div class="t cell" style="left:1213px;top:581px;">Бочкарев Юрий Степанович</div><div class="a" style="left:204px;top:631px;width:1690px;height:1px;background:#e2e2e2"></div><svg class="a" style="left:221px;top:612px" width="17" height="13"><rect x="0.5" y="0.5" width="12" height="9" fill="#fff" stroke="#8797b2" stroke-width="1"/><path d="M3 2.5 H10 M3 4.5 H10 M3 6.5 H10" stroke="#8797b2" stroke-width="1"/><path d="M8.9 8.5 L10.8 10.5 L14.4 6.6" stroke="#139a13" stroke-width="2.4" fill="none" stroke-linecap="round"/><path d="M8.9 8.5 L10.8 10.5 L14.4 6.6" stroke="#2bd82b" stroke-width="1.1" fill="none"/></svg><div class="t cell" style="left:252px;top:610px;">03.08.2018</div><div class="t cell" style="left:373px;top:610px;letter-spacing:-0.2px;">ПШ00-000001</div><div class="t cell" style="left:516px;top:610px;">Основной склад</div><div class="t cell" style="left:866px;top:610px;">РУС-ШИНА ООО</div><div class="t cell" style="left:1213px;top:610px;">Любимов Валерий Юрьевич</div><div class="a" style="left:204px;top:633px;width:152px;height:26px;background:#fdd816"></div><div class="a" style="left:357px;top:633px;width:142px;height:26px;background:#fef19e"></div><div class="a" style="left:500px;top:633px;width:349px;height:26px;background:#fef19e"></div><div class="a" style="left:850px;top:633px;width:346px;height:26px;background:#fef19e"></div><div class="a" style="left:1197px;top:633px;width:349px;height:26px;background:#fef19e"></div><div class="a" style="left:1547px;top:633px;width:347px;height:26px;background:#fef19e"></div><div class="a" style="left:204px;top:660px;width:1690px;height:1px;background:#e2e2e2"></div><svg class="a" style="left:221px;top:641px" width="17" height="13"><rect x="0.5" y="0.5" width="12" height="9" fill="#fff" stroke="#8797b2" stroke-width="1"/><path d="M3 2.5 H10 M3 4.5 H10 M3 6.5 H10" stroke="#8797b2" stroke-width="1"/><path d="M8.9 8.5 L10.8 10.5 L14.4 6.6" stroke="#139a13" stroke-width="2.4" fill="none" stroke-linecap="round"/><path d="M8.9 8.5 L10.8 10.5 L14.4 6.6" stroke="#2bd82b" stroke-width="1.1" fill="none"/></svg><div class="t cell" style="left:252px;top:639px;">15.08.2018</div><div class="t cell" style="left:373px;top:639px;letter-spacing:-0.2px;">ТД00-000001</div><div class="t cell" style="left:516px;top:639px;">Основной склад</div><div class="t cell" style="left:866px;top:639px;">Торговый дом "Комплексный"</div><div class="t cell" style="left:1213px;top:639px;">Любимов Валерий Юрьевич</div><svg class="a" style="left:0;top:0" width="1903" height="982"><path d="M275 147.5 L412 249" stroke="#e0000f" stroke-width="2.2"/><path d="M269 143 L280 144.3 L273.3 153.2 Z" fill="#e0000f"/><circle cx="444.2" cy="268.8" r="39.7" fill="#d90a0b"/></svg><div class="a" style="left:404px;top:252px;width:80px;text-align:center;font-family:'Liberation Sans';font-size:36.5px;line-height:40px;color:#fff">3</div>
</body></html>
